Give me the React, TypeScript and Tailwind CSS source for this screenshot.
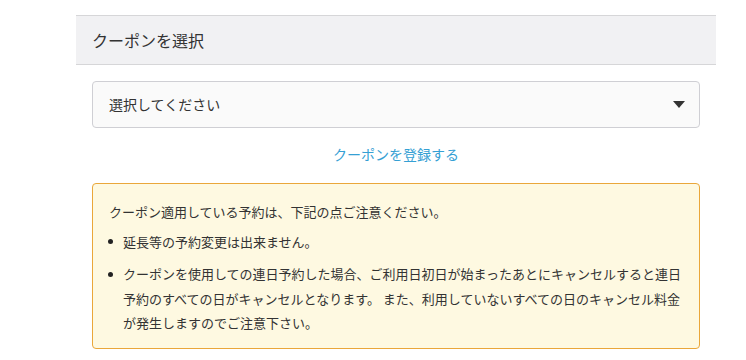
import React from "react";

export default function App() {
  const font = { fontFamily: '"Noto Sans CJK JP", "Noto Sans", sans-serif' };
  return (
    <div className="w-[746px] h-[360px] bg-white overflow-hidden text-[#333]" style={font}>
      <div className="ml-[76px] w-[640px] pt-[15px]">
        <div className="h-[50px] border-y border-[#d6d6d8] bg-[#f1f1f3] flex items-center pl-4 text-[16px] text-[#333]">
          クーポンを選択
        </div>
        <div className="px-4 pt-[16px]">
          <div className="h-[47px] rounded border border-[#cfcfd4] bg-[#fafafa] flex items-center justify-between pl-4 pr-[14px] text-[14px]">
            <span>選択してください</span>
            <svg width="12" height="7" viewBox="0 0 12 7">
              <polygon points="0,0 12,0 6,7" fill="#333" />
            </svg>
          </div>
          <div className="mt-[15px] text-center text-[14px] text-[#35a0d4] leading-[22px]">クーポンを登録する</div>
          <div className="mt-[18px] rounded border border-[#eaa73a] bg-[#fef9e1] pl-4 pr-4 pt-[16px] pb-[12px] text-[13px] leading-[24.5px]">
            <p>クーポン適用している予約は、下記の点ご注意ください。</p>
            <ul className="mt-[5px]">
              <li className="flex">
                <span className="w-[14px] shrink-0 h-[24.5px] flex items-center">
                  <span className="block w-[5px] h-[5px] rounded-full bg-[#222] -ml-[1px]" />
                </span>
                <span>延長等の予約変更は出来ません。</span>
              </li>
              <li className="flex mt-[8px]">
                <span className="w-[14px] shrink-0 h-[24.5px] flex items-center">
                  <span className="block w-[5px] h-[5px] rounded-full bg-[#222] -ml-[1px]" />
                </span>
                <span>
                  クーポンを使用しての連日予約した場合、ご利用日初日が始まったあとにキャンセルすると連日予約のすべての日がキャンセルとなります。 また、利用していないすべての日のキャンセル料金が発生しますのでご注意下さい。
                </span>
              </li>
            </ul>
          </div>
        </div>
      </div>
    </div>
  );
}
